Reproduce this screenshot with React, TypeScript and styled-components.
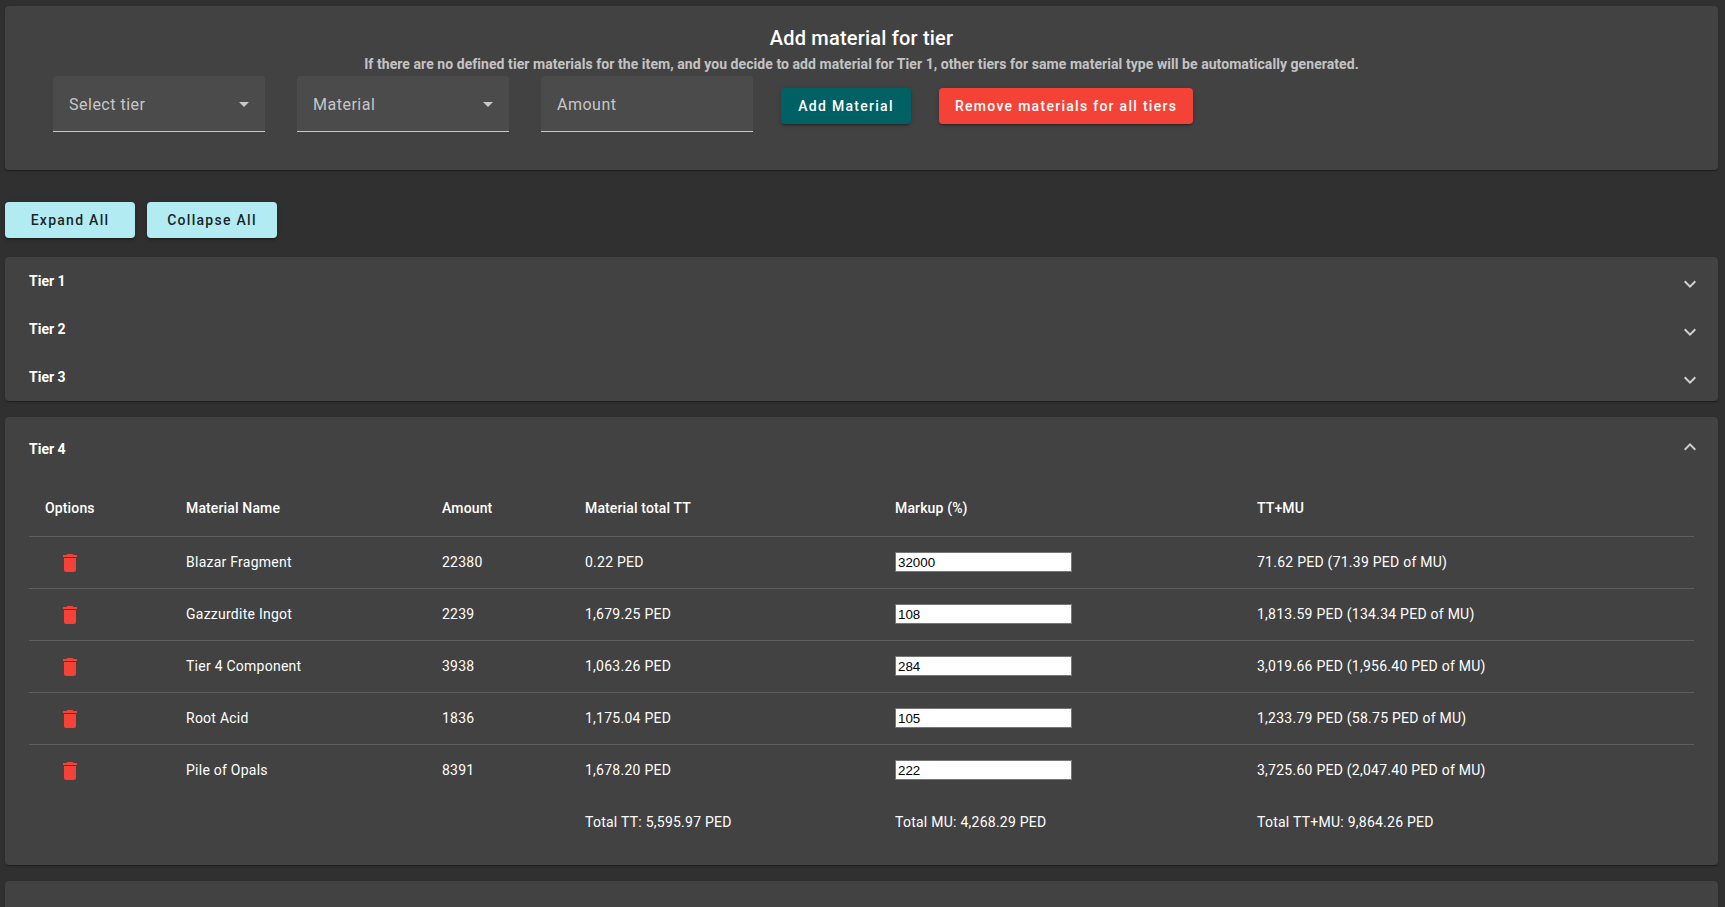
import React from 'react';
import styled, { createGlobalStyle } from 'styled-components';

const GlobalStyle = createGlobalStyle`
  html, body {
    margin: 0;
    padding: 0;
    background: #303030;
    overflow: hidden;
  }
  body {
    font-family: Roboto, "Liberation Sans", sans-serif;
    color: #fff;
  }
`;

const Page = styled.div`
  height: 907px;
  overflow: hidden;
  padding: 6px 7px 0 5px;
  box-sizing: border-box;
`;

const Panel = styled.div`
  background: #424242;
  border-radius: 4px;
  box-shadow: 0 2px 1px -1px rgba(0,0,0,0.2), 0 1px 1px 0 rgba(0,0,0,0.14), 0 1px 3px 0 rgba(0,0,0,0.12);
`;

const FormCard = styled(Panel)`
  height: 164px;
  padding-top: 19px;
  box-sizing: border-box;
  text-align: center;
`;

const FormTitle = styled.h2`
  margin: 0;
  font-size: 20px;
  line-height: 26px;
  font-weight: 500;
  letter-spacing: 0.2px;
`;

const FormHint = styled.p`
  margin: 3px 0 0;
  font-size: 14px;
  line-height: 20px;
  font-weight: 700;
  letter-spacing: 0.06px;
  color: rgba(255,255,255,0.7);
`;

const FormRow = styled.div`
  display: flex;
  align-items: flex-start;
  padding: 2px 0 0 48px;
`;

const Field = styled.div`
  width: 212px;
  height: 56px;
  margin-right: 32px;
  padding: 2px 9px 0 16px;
  box-sizing: border-box;
  display: flex;
  align-items: center;
  justify-content: space-between;
  background: rgba(255,255,255,0.05);
  border-radius: 4px 4px 0 0;
  border-bottom: 1px solid rgba(255,255,255,0.7);
  font-size: 16px;
  color: rgba(255,255,255,0.7);
  letter-spacing: 0.5px;
`;

const Caret = styled.svg`
  width: 24px;
  height: 24px;
  margin-top: -2px;
  fill: rgba(255,255,255,0.7);
`;

const ActionButton = styled.button<{ $bg: string; $fg: string; $left?: number; $width?: number }>`
  height: 36px;
  margin: 12px 0 0 ${p => p.$left ?? 0}px;
  padding: 0 16px;
  ${p => (p.$width ? `width: ${p.$width}px; padding: 0;` : '')}
  border: 0;
  border-radius: 4px;
  background: ${p => p.$bg};
  color: ${p => p.$fg};
  font-family: Roboto, "Liberation Sans", sans-serif;
  font-size: 14px;
  font-weight: 500;
  letter-spacing: 1.28px;
  box-shadow: 0 3px 1px -2px rgba(0,0,0,0.2), 0 2px 2px 0 rgba(0,0,0,0.14), 0 1px 5px 0 rgba(0,0,0,0.12);
`;

const ExpandBar = styled.div`
  display: flex;
  gap: 12px;
  padding: 20px 0 19px;
  margin-top: 12px;
`;

const ExpandButton = styled(ActionButton)`
  width: 130px;
  margin: 0;
  padding: 0;
`;

const AccordionStack = styled(Panel)`
  margin-bottom: 16px;
`;

const NextTier = styled(Panel)`
  height: 60px;
`;

const TierHeader = styled.div<{ $open?: boolean }>`
  height: ${p => (p.$open ? 64 : 48)}px;
  padding: 0 16px 0 24px;
  display: flex;
  align-items: center;
  justify-content: space-between;
  font-size: 14px;
  font-weight: 700;
`;

const Chevron = styled.svg<{ $up?: boolean }>`
  width: 24px;
  height: 24px;
  fill: rgba(255,255,255,0.75);
  position: relative;
  top: ${p => (p.$up ? -2 : 3)}px;
`;

const TableWrap = styled.div`
  padding: 0 24px 17px;
`;

const Table = styled.table`
  width: 1665px;
  border-collapse: collapse;
  table-layout: fixed;
  font-size: 14px;
`;

const HeadCell = styled.th<{ $w: number }>`
  width: ${p => p.$w}px;
  height: 55px;
  padding: 0 16px;
  box-sizing: border-box;
  text-align: left;
  font-weight: 500;
  letter-spacing: 0.14px;
  border-bottom: 1px solid #5e5e5e;
`;

const BodyRow = styled.tr<{ $divider?: boolean }>`
  border-bottom: ${p => (p.$divider ? '1px solid #5e5e5e' : 'none')};
`;

const Cell = styled.td`
  height: 52px;
  padding: 0 16px;
  box-sizing: border-box;
  font-weight: 400;
  letter-spacing: 0.25px;
`;

const TrashButton = styled.button`
  width: 48px;
  height: 48px;
  padding: 13px 11px 11px 13px;
  border: 0;
  background: none;
  display: block;
`;

const TrashIcon = styled.svg`
  width: 24px;
  height: 24px;
  display: block;
  fill: #f44336;
`;

const MarkupInput = styled.input`
  width: 177px;
  height: 20px;
  padding: 1px 2px;
  box-sizing: border-box;
  display: block;
  border: 1px solid #767676;
  background: #fff;
  color: #000;
  font-family: "Liberation Sans", Arial, sans-serif;
  font-size: 13.33px;
`;

const TierArrow = ({ up }: { up?: boolean }) => (
  <Chevron viewBox="0 0 24 24" $up={up}>
    <path d={up ? 'M7.41 15.41 12 10.83l4.59 4.58L18 14l-6-6-6 6z' : 'M7.41 8.59 12 13.17l4.59-4.58L18 10l-6 6-6-6z'} />
  </Chevron>
);

const materials = [
  { name: 'Blazar Fragment', amount: '22380', tt: '0.22 PED', markup: '32000', total: '71.62 PED (71.39 PED of MU)' },
  { name: 'Gazzurdite Ingot', amount: '2239', tt: '1,679.25 PED', markup: '108', total: '1,813.59 PED (134.34 PED of MU)' },
  { name: 'Tier 4 Component', amount: '3938', tt: '1,063.26 PED', markup: '284', total: '3,019.66 PED (1,956.40 PED of MU)' },
  { name: 'Root Acid', amount: '1836', tt: '1,175.04 PED', markup: '105', total: '1,233.79 PED (58.75 PED of MU)' },
  { name: 'Pile of Opals', amount: '8391', tt: '1,678.20 PED', markup: '222', total: '3,725.60 PED (2,047.40 PED of MU)' },
];

const columns = [
  { title: 'Options', w: 141 },
  { title: 'Material Name', w: 256 },
  { title: 'Amount', w: 143 },
  { title: 'Material total TT', w: 310 },
  { title: 'Markup (%)', w: 362 },
  { title: 'TT+MU', w: 453 },
];

export default function App() {
  return (
    <Page>
      <GlobalStyle />
      <FormCard>
        <FormTitle>Add material for tier</FormTitle>
        <FormHint>
          If there are no defined tier materials for the item, and you decide to add material for Tier 1, other tiers for same material type will be automatically generated.
        </FormHint>
        <FormRow>
          <Field>
            Select tier
            <Caret viewBox="0 0 24 24"><path d="M7 10l5 5 5-5z" /></Caret>
          </Field>
          <Field>
            Material
            <Caret viewBox="0 0 24 24"><path d="M7 10l5 5 5-5z" /></Caret>
          </Field>
          <Field>Amount</Field>
          <ActionButton $bg="#006064" $fg="#fff" $left={-4} $width={130}>Add Material</ActionButton>
          <ActionButton $bg="#f44336" $fg="#fff" $left={28}>Remove materials for all tiers</ActionButton>
        </FormRow>
      </FormCard>

      <ExpandBar>
        <ExpandButton $bg="#b2ebf2" $fg="rgba(0,0,0,0.87)">Expand All</ExpandButton>
        <ExpandButton $bg="#b2ebf2" $fg="rgba(0,0,0,0.87)">Collapse All</ExpandButton>
      </ExpandBar>

      <AccordionStack>
        <TierHeader>Tier 1<TierArrow /></TierHeader>
        <TierHeader>Tier 2<TierArrow /></TierHeader>
        <TierHeader>Tier 3<TierArrow /></TierHeader>
      </AccordionStack>

      <AccordionStack>
        <TierHeader $open>Tier 4<TierArrow up /></TierHeader>
        <TableWrap>
          <Table>
            <thead>
              <tr>
                {columns.map(c => <HeadCell key={c.title} $w={c.w}>{c.title}</HeadCell>)}
              </tr>
            </thead>
            <tbody>
              {materials.map((m, i) => (
                <BodyRow key={m.name} $divider={i < materials.length - 1}>
                  <Cell>
                    <TrashButton aria-label="delete">
                      <TrashIcon viewBox="0 0 24 24">
                        <path d="M6 19c0 1.1.9 2 2 2h8c1.1 0 2-.9 2-2V7H6v12zM19 4h-3.5l-1-1h-5l-1 1H5v2h14V4z" />
                      </TrashIcon>
                    </TrashButton>
                  </Cell>
                  <Cell>{m.name}</Cell>
                  <Cell>{m.amount}</Cell>
                  <Cell>{m.tt}</Cell>
                  <Cell><MarkupInput defaultValue={m.markup} /></Cell>
                  <Cell>{m.total}</Cell>
                </BodyRow>
              ))}
              <tr>
                <Cell />
                <Cell />
                <Cell />
                <Cell>Total TT: 5,595.97 PED</Cell>
                <Cell>Total MU: 4,268.29 PED</Cell>
                <Cell>Total TT+MU: 9,864.26 PED</Cell>
              </tr>
            </tbody>
          </Table>
        </TableWrap>
      </AccordionStack>

      <NextTier />
    </Page>
  );
}
